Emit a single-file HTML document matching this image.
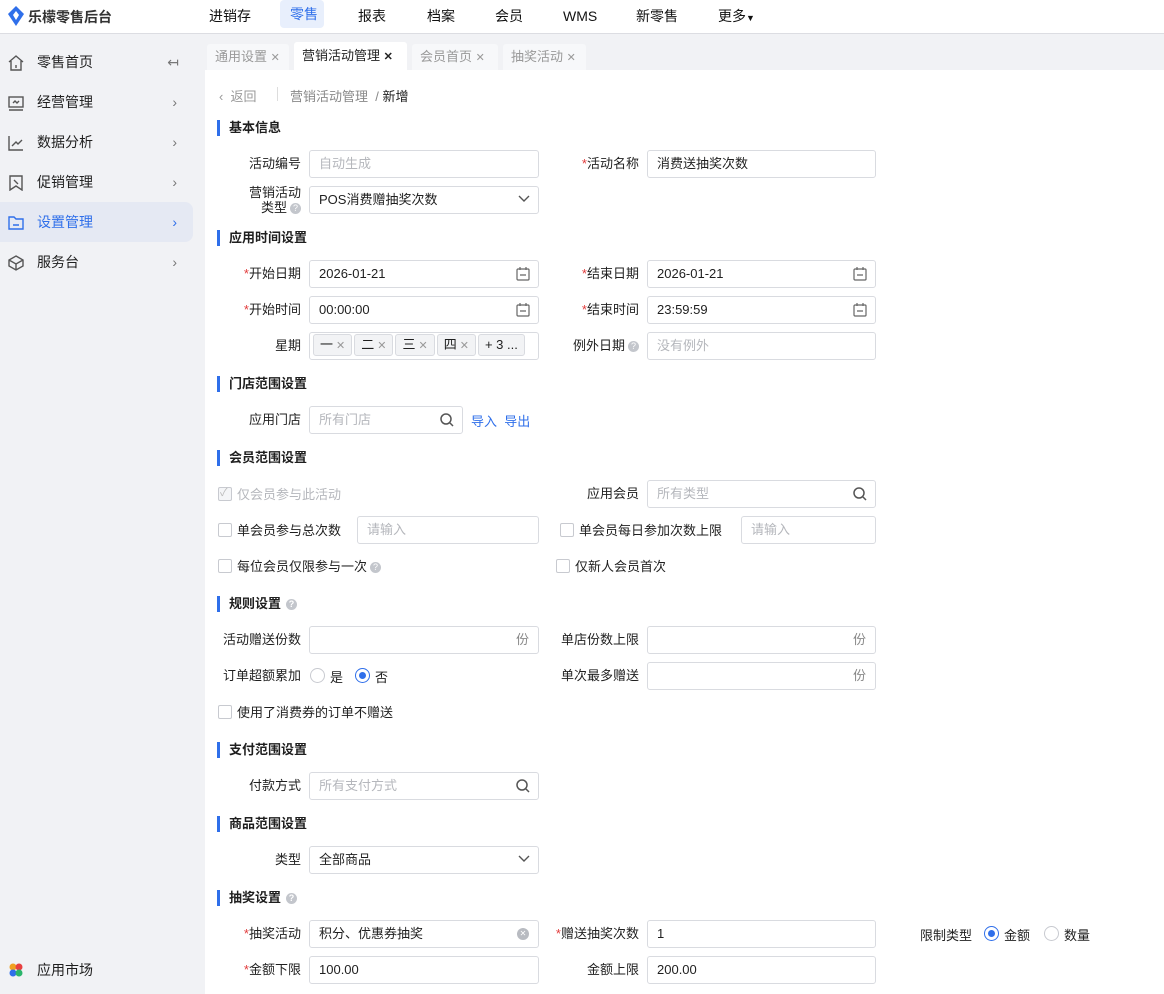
<!DOCTYPE html>
<html><head><meta charset="utf-8"><style>
*{box-sizing:border-box;margin:0;padding:0}
body{width:1164px;height:994px;overflow:hidden;position:relative;font-family:"Liberation Sans","Noto Sans CJK SC",sans-serif;font-size:13px;color:#1f1f1f;background:#fff}
.a{position:absolute}
.top{left:0;top:0;width:1164px;height:34px;background:#fff;border-bottom:1px solid #dcdde2}
.nav{top:2px;height:28px;line-height:28px;font-size:14px;color:#111}
.side{left:0;top:34px;width:205px;height:960px;background:#f1f2f5}
.si{left:0;width:193px;height:40px;line-height:40px;font-size:14px;padding-left:37px}
.si .ch{position:absolute;right:16px;top:0;color:#777;font-size:14px}
.tabs{left:205px;top:34px;width:959px;height:36px;background:#f1f2f5}
.tab{top:44px;height:26px;line-height:26px;background:#f7f8fa;color:#999;font-size:13px;padding-left:8px;border-radius:3px 3px 0 0}
.sec{left:217px;font-weight:bold;font-size:13px;padding-left:12px;height:16px;line-height:16px}
.sec:before{content:"";position:absolute;left:0;top:0;width:3px;height:16px;background:#2f6fea}
.l{width:140px;text-align:right;height:18px;line-height:18px}
.l1{left:161px}.l2{left:499px}
.s{color:#e23b3b}
.i{height:28px;border:1px solid #d9dbe0;border-radius:3px;line-height:26px;padding-left:9px;font-size:13px}
.i1{left:309px;width:230px}.i2{left:647px;width:229px}
.ph{color:#b5b7bc}
.ic{position:absolute;right:8px;top:6px}
.u{position:absolute;right:9px;top:0;color:#888}
.cb{width:14px;height:14px;border:1px solid #c8cad0;border-radius:2px;background:#fff}
.q{display:inline-block;width:11px;height:11px;border-radius:50%;background:#c3c6cc;color:#fff;font-size:9px;line-height:11px;text-align:center;vertical-align:1px;margin-left:3px}
.tg{display:inline-block;height:22px;line-height:20px;border:1px solid #d9dbe0;background:#f2f3f5;border-radius:3px;padding:0 6px;margin-right:2px;font-size:13px}
.tg i{font-style:normal;color:#999;font-size:11px;margin-left:3px}
.rd{width:15px;height:15px;border-radius:50%;border:1px solid #c8cad0;background:#fff}
.rd.on{border-color:#2f6fea}
.rd.on:after{content:"";position:absolute;left:3px;top:3px;width:7px;height:7px;border-radius:50%;background:#2f6fea}
</style></head><body>
<div class="a top"></div>
<svg class="a" style="left:8px;top:6px" width="16" height="20" viewBox="0 0 16 20"><path d="M8 0 L16 8 L8 20 L0 8 Z" fill="#2f6fea"/><path d="M8 5 L11 9 L8 14 L5 9Z" fill="#fff"/></svg>
<div class="a" style="left:28px;top:7px;font-size:14px;font-weight:bold;color:#333">乐檬零售后台</div>
<div class="a nav" style="left:209px">进销存</div>
<div class="a" style="left:280px;top:0;width:44px;height:28px;background:#e8effc;border-radius:4px"></div>
<div class="a nav" style="left:290px;color:#2f6fea;top:0">零售</div>
<div class="a nav" style="left:358px">报表</div>
<div class="a nav" style="left:427px">档案</div>
<div class="a nav" style="left:495px">会员</div>
<div class="a nav" style="left:563px">WMS</div>
<div class="a nav" style="left:636px">新零售</div>
<div class="a nav" style="left:718px">更多<span style="font-size:9px">▼</span></div>

<div class="a side"></div>
<div class="a si" style="top:42px">零售首页<span class="ch" style="right:14px">↤</span></div>
<div class="a si" style="top:82px">经营管理<span class="ch">›</span></div>
<div class="a si" style="top:122px">数据分析<span class="ch">›</span></div>
<div class="a si" style="top:162px">促销管理<span class="ch">›</span></div>
<div class="a si" style="top:202px;background:#e5e9f3;border-radius:0 8px 8px 0;color:#2f6fea">设置管理<span class="ch" style="color:#2f6fea">›</span></div>
<div class="a si" style="top:242px">服务台<span class="ch">›</span></div>
<div class="a si" style="top:950px">应用市场</div>
<svg class="a" style="left:7px;top:54px" width="18" height="18" viewBox="0 0 18 18" fill="none" stroke="#555" stroke-width="1.4"><path d="M2 8 L9 2 L16 8 M4 7 V16 H14 V7 M9 11 V14"/></svg>
<svg class="a" style="left:8px;top:95px" width="16" height="16" viewBox="0 0 16 16" fill="none" stroke="#555" stroke-width="1.4"><rect x="1" y="2" width="14" height="10"/><path d="M1 15 H15 M5 8 L7 6 L9 8 L11 6"/></svg>
<svg class="a" style="left:8px;top:135px" width="16" height="16" viewBox="0 0 16 16" fill="none" stroke="#555" stroke-width="1.4"><path d="M1 1 V15 H15 M4 11 L8 7 L10 9 L14 5"/></svg>
<svg class="a" style="left:8px;top:175px" width="16" height="16" viewBox="0 0 16 16" fill="none" stroke="#555" stroke-width="1.4"><path d="M2 1 H14 V15 L8 11 L2 15 Z M6 5 L10 9"/></svg>
<svg class="a" style="left:8px;top:215px" width="16" height="16" viewBox="0 0 16 16" fill="none" stroke="#2f6fea" stroke-width="1.4"><path d="M1 2 H6 L8 4 H15 V14 H1 Z M5 10 H11"/></svg>
<svg class="a" style="left:8px;top:255px" width="16" height="16" viewBox="0 0 16 16" fill="none" stroke="#555" stroke-width="1.4"><path d="M8 1 L15 5 V11 L8 15 L1 11 V5 Z M1 5 L8 9 L15 5 M8 9 V15"/></svg>
<svg class="a" style="left:8px;top:962px" width="16" height="16" viewBox="0 0 16 16"><circle cx="5" cy="5" r="3.5" fill="#f0a020"/><circle cx="11" cy="5" r="3.5" fill="#e84040"/><circle cx="5" cy="11" r="3.5" fill="#2f6fea"/><circle cx="11" cy="11" r="3.5" fill="#2bb56b"/></svg>

<div class="a tabs"></div>
<div class="a tab" style="left:207px;width:82px">通用设置 <span style="font-size:11px">✕</span></div>
<div class="a tab" style="left:294px;width:113px;background:#fff;color:#222;top:42px;height:28px;line-height:28px">营销活动管理 <span style="font-size:11px;font-weight:bold">✕</span></div>
<div class="a tab" style="left:412px;width:86px">会员首页 <span style="font-size:11px">✕</span></div>
<div class="a tab" style="left:503px;width:83px">抽奖活动 <span style="font-size:11px">✕</span></div>

<div class="a" style="left:219px;top:86px;color:#999">‹&nbsp; 返回</div>
<div class="a" style="left:277px;top:87px;width:1px;height:14px;background:#ddd"></div>
<div class="a" style="left:290px;top:86px;color:#888">营销活动管理 &nbsp;/ <span style="color:#222">新增</span></div>

<div class="a sec" style="top:120px">基本信息</div>
<div class="a l l1" style="top:155px">活动编号</div><div class="a i i1" style="top:150px"><span class="ph">自动生成</span></div>
<div class="a l l2" style="top:155px"><span class="s">*</span>活动名称</div><div class="a i i2" style="top:150px">消费送抽奖次数</div>
<div class="a l l1" style="top:185px;line-height:15px;height:30px">营销活动　　<br>类型<span class="q">?</span></div>
<div class="a i i1" style="top:186px">POS消费赠抽奖次数<svg class="ic" style="top:8px" width="12" height="8" viewBox="0 0 12 8" fill="none" stroke="#555" stroke-width="1.4"><path d="M1 1 L6 6 L11 1"/></svg></div>

<div class="a sec" style="top:230px">应用时间设置</div>
<div class="a l l1" style="top:265px"><span class="s">*</span>开始日期</div><div class="a i i1" style="top:260px">2026-01-21<svg class="ic" width="14" height="14" viewBox="0 0 14 14" fill="none" stroke="#666" stroke-width="1.2"><rect x="1" y="2" width="12" height="11" rx="1"/><path d="M4 0 V3 M10 0 V3 M4 8 H10"/></svg></div>
<div class="a l l2" style="top:265px"><span class="s">*</span>结束日期</div><div class="a i i2" style="top:260px">2026-01-21<svg class="ic" width="14" height="14" viewBox="0 0 14 14" fill="none" stroke="#666" stroke-width="1.2"><rect x="1" y="2" width="12" height="11" rx="1"/><path d="M4 0 V3 M10 0 V3 M4 8 H10"/></svg></div>
<div class="a l l1" style="top:301px"><span class="s">*</span>开始时间</div><div class="a i i1" style="top:296px">00:00:00<svg class="ic" width="14" height="14" viewBox="0 0 14 14" fill="none" stroke="#666" stroke-width="1.2"><rect x="1" y="2" width="12" height="11" rx="1"/><path d="M4 0 V3 M10 0 V3 M4 8 H10"/></svg></div>
<div class="a l l2" style="top:301px"><span class="s">*</span>结束时间</div><div class="a i i2" style="top:296px">23:59:59<svg class="ic" width="14" height="14" viewBox="0 0 14 14" fill="none" stroke="#666" stroke-width="1.2"><rect x="1" y="2" width="12" height="11" rx="1"/><path d="M4 0 V3 M10 0 V3 M4 8 H10"/></svg></div>
<div class="a l l1" style="top:337px">星期</div>
<div class="a i i1" style="top:332px;padding-left:3px;line-height:24px;white-space:nowrap"><span class="tg">一<i>✕</i></span><span class="tg">二<i>✕</i></span><span class="tg">三<i>✕</i></span><span class="tg">四<i>✕</i></span><span class="tg">+ 3 ...</span></div>
<div class="a l l2" style="top:337px">例外日期<span class="q">?</span></div><div class="a i i2" style="top:332px"><span class="ph">没有例外</span></div>

<div class="a sec" style="top:376px">门店范围设置</div>
<div class="a l l1" style="top:411px">应用门店</div><div class="a i" style="left:309px;width:154px;top:406px"><span class="ph">所有门店</span><svg class="ic" width="14" height="14" viewBox="0 0 14 14" fill="none" stroke="#555" stroke-width="1.5"><circle cx="6" cy="6" r="5"/><path d="M10 10 L13 13"/></svg></div>
<div class="a" style="left:471px;top:411px;color:#2f6fea">导入 &nbsp;导出</div>

<div class="a sec" style="top:450px">会员范围设置</div>
<div class="a cb" style="left:218px;top:487px;background:#f4f5f7"></div><div class="a" style="left:220px;top:484px;color:#bbb;font-size:11px">✓</div>
<div class="a" style="left:237px;top:484px;color:#b5b7bc">仅会员参与此活动</div>
<div class="a l l2" style="top:485px">应用会员</div><div class="a i i2" style="top:480px"><span class="ph">所有类型</span><svg class="ic" width="14" height="14" viewBox="0 0 14 14" fill="none" stroke="#555" stroke-width="1.5"><circle cx="6" cy="6" r="5"/><path d="M10 10 L13 13"/></svg></div>
<div class="a cb" style="left:218px;top:523px"></div><div class="a" style="left:237px;top:520px">单会员参与总次数</div>
<div class="a i" style="left:357px;width:182px;top:516px"><span class="ph">请输入</span></div>
<div class="a cb" style="left:560px;top:523px"></div><div class="a" style="left:579px;top:520px">单会员每日参加次数上限</div>
<div class="a i" style="left:741px;width:135px;top:516px"><span class="ph">请输入</span></div>
<div class="a cb" style="left:218px;top:559px"></div><div class="a" style="left:237px;top:556px">每位会员仅限参与一次<span class="q">?</span></div>
<div class="a cb" style="left:556px;top:559px"></div><div class="a" style="left:575px;top:556px">仅新人会员首次</div>

<div class="a sec" style="top:596px">规则设置<span class="q" style="margin-left:5px">?</span></div>
<div class="a l l1" style="top:631px">活动赠送份数</div><div class="a i i1" style="top:626px"><span class="u">份</span></div>
<div class="a l l2" style="top:631px">单店份数上限</div><div class="a i i2" style="top:626px"><span class="u">份</span></div>
<div class="a l l1" style="top:667px">订单超额累加</div>
<div class="a rd" style="left:310px;top:668px"></div><div class="a" style="left:330px;top:667px">是</div>
<div class="a rd on" style="left:355px;top:668px"></div><div class="a" style="left:375px;top:667px">否</div>
<div class="a l l2" style="top:667px">单次最多赠送</div><div class="a i i2" style="top:662px"><span class="u">份</span></div>
<div class="a cb" style="left:218px;top:705px"></div><div class="a" style="left:237px;top:702px">使用了消费券的订单不赠送</div>

<div class="a sec" style="top:742px">支付范围设置</div>
<div class="a l l1" style="top:777px">付款方式</div><div class="a i i1" style="top:772px"><span class="ph">所有支付方式</span><svg class="ic" width="14" height="14" viewBox="0 0 14 14" fill="none" stroke="#555" stroke-width="1.5"><circle cx="6" cy="6" r="5"/><path d="M10 10 L13 13"/></svg></div>

<div class="a sec" style="top:816px">商品范围设置</div>
<div class="a l l1" style="top:851px">类型</div><div class="a i i1" style="top:846px">全部商品<svg class="ic" style="top:8px" width="12" height="8" viewBox="0 0 12 8" fill="none" stroke="#555" stroke-width="1.4"><path d="M1 1 L6 6 L11 1"/></svg></div>

<div class="a sec" style="top:890px">抽奖设置<span class="q" style="margin-left:5px">?</span></div>
<div class="a l l1" style="top:925px"><span class="s">*</span>抽奖活动</div><div class="a i i1" style="top:920px">积分、优惠券抽奖<span class="a" style="right:9px;top:7px;width:12px;height:12px;border-radius:50%;background:#b8bbc1;color:#fff;font-size:8px;line-height:12px;text-align:center">✕</span></div>
<div class="a l l2" style="top:925px"><span class="s">*</span>赠送抽奖次数</div><div class="a i i2" style="top:920px">1</div>
<div class="a" style="left:920px;top:925px">限制类型</div>
<div class="a rd on" style="left:984px;top:926px"></div><div class="a" style="left:1004px;top:925px">金额</div>
<div class="a rd" style="left:1044px;top:926px"></div><div class="a" style="left:1064px;top:925px">数量</div>
<div class="a l l1" style="top:961px"><span class="s">*</span>金额下限</div><div class="a i i1" style="top:956px">100.00</div>
<div class="a l l2" style="top:961px">金额上限</div><div class="a i i2" style="top:956px">200.00</div>
</body></html>
